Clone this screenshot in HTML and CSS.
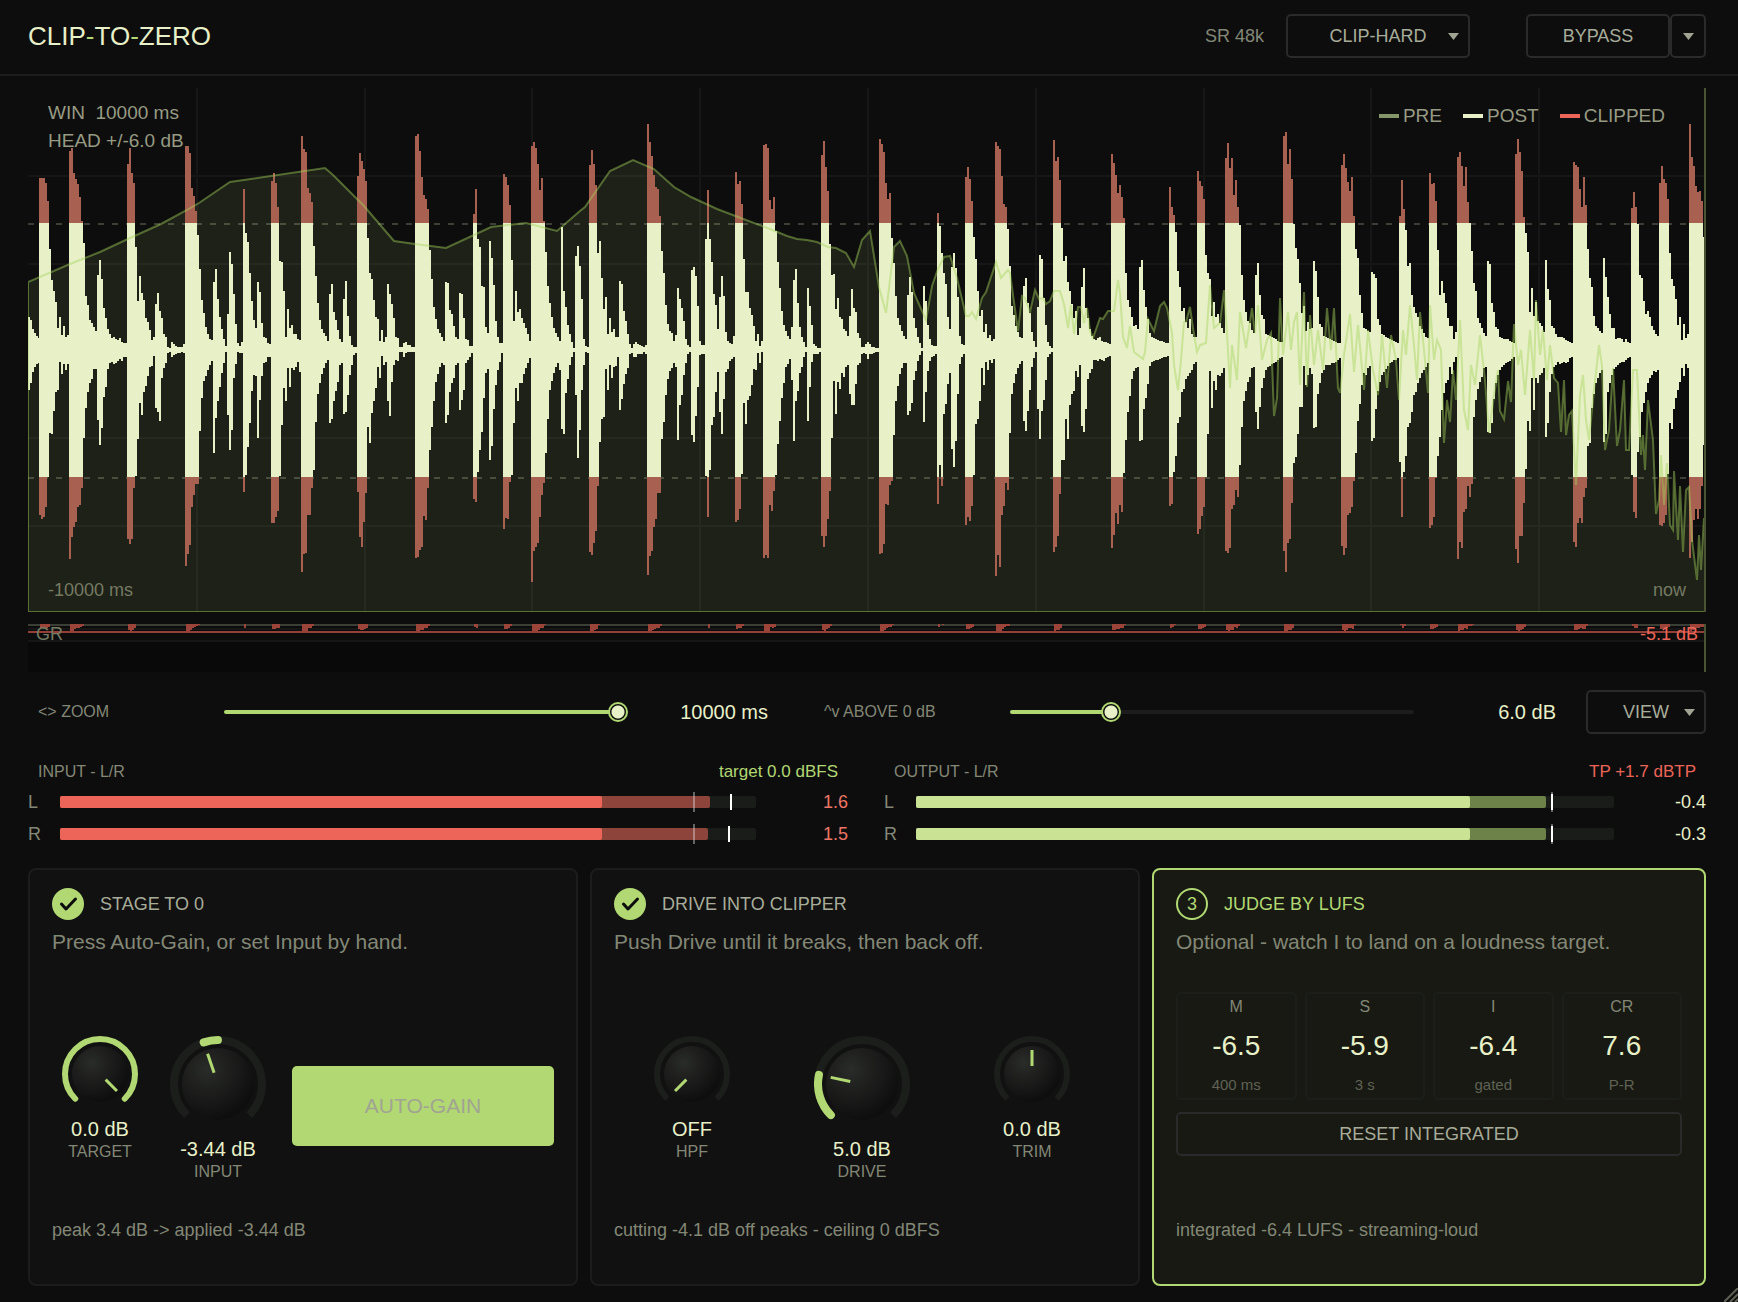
FILE: index.html
```
<!DOCTYPE html>
<html lang="en">
<head>
    <meta charset="UTF-8">
    <meta name="viewport" content="width=device-width, initial-scale=1.0">
    <title>Clip-To-Zero</title>
    <link rel="stylesheet" href="styles.css">
</head>
<body>
    <header class="header">
        <h1 class="logo">CLIP<span>-</span>TO<span>-</span>ZERO</h1>
        <div class="sample-rate">SR 48k</div>
        <div class="select mode-select">
            <select aria-label="Clip mode">
                <option>CLIP-HARD</option>
                <option>CLIP-SOFT</option>
            </select>
            <svg class="arrow" viewBox="0 0 11 7"><path d="M0 0H11L5.5 7Z"/></svg>
        </div>
        <div class="bypass-group">
            <button class="button bypass-button">BYPASS</button>
            <button class="button more-button" aria-label="Bypass options">
                <svg class="arrow" viewBox="0 0 11 7"><path d="M0 0H11L5.5 7Z"/></svg>
            </button>
        </div>
    </header>

    <main class="main">
        <div class="scope">
            <svg class="scope-svg" viewBox="0 0 1678 524" preserveAspectRatio="none">
                <path id="spectrum-fill" class="spectrum-fill"/>
                <path id="grid" class="grid-lines"/>
                <path class="ceiling" d="M0 136H1678M0 390H1678"/>
                <path id="wave-clip" class="wave-clip"/>
                <path id="wave-post" class="wave-post"/>
                <path id="spectrum-line" class="spectrum-line"/>
                <path class="playhead" d="M1677 0V524"/>
            </svg>
            <div class="scope-info">WIN  10000 ms<br>HEAD +/-6.0 dB</div>
            <div class="legend">
                <span class="pre">PRE</span>
                <span class="post">POST</span>
                <span class="clipped">CLIPPED</span>
            </div>
            <div class="time-start">-10000 ms</div>
            <div class="time-end">now</div>
        </div>

        <div class="gr">
            <svg class="gr-svg" viewBox="0 0 1678 48" preserveAspectRatio="none">
                <path class="gr-back" d="M0 0H1678V17H0Z"/>
                <path class="gr-top" d="M0 1H1678"/>
                <path class="gr-grid" d="M0 5H1678M0 17H1678"/>
                <path id="gr-bars" class="gr-bars"/>
                <path class="gr-max" d="M0 8H1678"/>
                <path class="playhead" d="M1677 0V48"/>
            </svg>
            <div class="gr-label">GR</div>
            <div class="gr-value">-5.1 dB</div>
        </div>

        <div class="controls">
            <label class="control-label" for="zoom">&lt;&gt; ZOOM</label>
            <input class="slider" id="zoom" type="range" min="0" max="100" step="0.1" value="100" style="--fill: 98%">
            <output class="control-value" for="zoom">10000 ms</output>
            <label class="control-label above-label" for="above">^v ABOVE 0 dB</label>
            <input class="slider" id="above" type="range" min="0" max="100" step="0.1" value="23.7" style="--fill: 25%">
            <output class="control-value" for="above">6.0 dB</output>
            <div class="select view-select">
                <select aria-label="View">
                    <option>VIEW</option>
                </select>
                <svg class="arrow" viewBox="0 0 11 7"><path d="M0 0H11L5.5 7Z"/></svg>
            </div>
        </div>

        <div class="meters">
            <section class="meter input-meter">
                <div class="meter-head"><span>INPUT - L/R</span><span class="target">target 0.0 dBFS</span></div>
                <div class="meter-row">
                    <span class="channel">L</span>
                    <div class="bar">
                        <div class="peak" style="width: 93.4%"></div>
                        <div class="rms" style="width: 77.9%"></div>
                        <div class="zero"></div>
                        <div class="hold" style="left: 96.3%"></div>
                    </div>
                    <span class="level">1.6</span>
                </div>
                <div class="meter-row">
                    <span class="channel">R</span>
                    <div class="bar">
                        <div class="peak" style="width: 93.1%"></div>
                        <div class="rms" style="width: 77.9%"></div>
                        <div class="zero"></div>
                        <div class="hold" style="left: 96%"></div>
                    </div>
                    <span class="level">1.5</span>
                </div>
            </section>
            <section class="meter output-meter">
                <div class="meter-head"><span>OUTPUT - L/R</span><span class="true-peak">TP +1.7 dBTP</span></div>
                <div class="meter-row">
                    <span class="channel">L</span>
                    <div class="bar">
                        <div class="peak" style="width: 90.3%"></div>
                        <div class="rms" style="width: 79.4%"></div>
                        <div class="zero"></div>
                        <div class="hold" style="left: 91%"></div>
                    </div>
                    <span class="level">-0.4</span>
                </div>
                <div class="meter-row">
                    <span class="channel">R</span>
                    <div class="bar">
                        <div class="peak" style="width: 90.3%"></div>
                        <div class="rms" style="width: 79.4%"></div>
                        <div class="zero"></div>
                        <div class="hold" style="left: 91%"></div>
                    </div>
                    <span class="level">-0.3</span>
                </div>
            </section>
        </div>

        <div class="cards">
            <section class="card">
                <div class="card-head">
                    <svg class="badge" viewBox="0 0 32 32"><circle class="disc" cx="16" cy="16" r="16"/><path class="check" d="M9.5 16L14 21L23.5 11"/></svg>
                    <h2>STAGE TO 0</h2>
                </div>
                <p class="hint">Press Auto-Gain, or set Input by hand.</p>
                <div class="card-body knobs stage-knobs">
                    <label class="knob small">
                        <input type="range" aria-label="Target">
                        <svg viewBox="0 0 76 76">
                            <defs>
                                <radialGradient id="body" cx="0.35" cy="0.3" r="0.7">
                                    <stop offset="0" stop-color="#2a2c29"/>
                                    <stop offset="1" stop-color="#0e0e0e"/>
                                </radialGradient>
                            </defs>
                            <circle class="body" cx="38" cy="38" r="28"/>
                            <circle class="arc" cx="38" cy="38" r="35" pathLength="360" stroke-dasharray="270 90" transform="rotate(135 38 38)"/>
                            <path class="pointer" d="M38 14V30" transform="rotate(135 38 38)"/>
                        </svg>
                        <span class="knob-value">0.0 dB</span>
                        <span class="knob-name">TARGET</span>
                    </label>
                    <label class="knob big">
                        <input type="range" aria-label="Input">
                        <svg viewBox="0 0 96 96">
                            <circle class="body" cx="48" cy="48" r="36"/>
                            <circle class="track" cx="48" cy="48" r="44" pathLength="360" stroke-dasharray="270 90" transform="rotate(135 48 48)"/>
                            <circle class="arc" cx="48" cy="48" r="44" pathLength="360" stroke-dasharray="19 341" transform="rotate(251 48 48)"/>
                            <path class="pointer" d="M48 16V36" transform="rotate(-19 48 48)"/>
                        </svg>
                        <span class="knob-value">-3.44 dB</span>
                        <span class="knob-name">INPUT</span>
                    </label>
                    <button class="auto-gain">AUTO-GAIN</button>
                </div>
                <p class="status">peak 3.4 dB -&gt; applied -3.44 dB</p>
            </section>

            <section class="card">
                <div class="card-head">
                    <svg class="badge" viewBox="0 0 32 32"><circle class="disc" cx="16" cy="16" r="16"/><path class="check" d="M9.5 16L14 21L23.5 11"/></svg>
                    <h2>DRIVE INTO CLIPPER</h2>
                </div>
                <p class="hint">Push Drive until it breaks, then back off.</p>
                <div class="card-body knobs drive-knobs">
                    <label class="knob small">
                        <input type="range" aria-label="HPF">
                        <svg viewBox="0 0 76 76">
                            <circle class="body" cx="38" cy="38" r="28"/>
                            <circle class="track" cx="38" cy="38" r="35" pathLength="360" stroke-dasharray="270 90" transform="rotate(135 38 38)"/>
                            <path class="pointer" d="M38 14V30" transform="rotate(-135 38 38)"/>
                        </svg>
                        <span class="knob-value">OFF</span>
                        <span class="knob-name">HPF</span>
                    </label>
                    <label class="knob big">
                        <input type="range" aria-label="Drive">
                        <svg viewBox="0 0 96 96">
                            <circle class="body" cx="48" cy="48" r="36"/>
                            <circle class="track" cx="48" cy="48" r="44" pathLength="360" stroke-dasharray="270 90" transform="rotate(135 48 48)"/>
                            <circle class="arc" cx="48" cy="48" r="44" pathLength="360" stroke-dasharray="57 303" transform="rotate(135 48 48)"/>
                            <path class="pointer" d="M48 16V36" transform="rotate(-78 48 48)"/>
                        </svg>
                        <span class="knob-value">5.0 dB</span>
                        <span class="knob-name">DRIVE</span>
                    </label>
                    <label class="knob small">
                        <input type="range" aria-label="Trim">
                        <svg viewBox="0 0 76 76">
                            <circle class="body" cx="38" cy="38" r="28"/>
                            <circle class="track" cx="38" cy="38" r="35" pathLength="360" stroke-dasharray="270 90" transform="rotate(135 38 38)"/>
                            <path class="pointer" d="M38 14V30"/>
                        </svg>
                        <span class="knob-value">0.0 dB</span>
                        <span class="knob-name">TRIM</span>
                    </label>
                </div>
                <p class="status">cutting -4.1 dB off peaks - ceiling 0 dBFS</p>
            </section>

            <section class="card active">
                <div class="card-head">
                    <span class="badge number">3</span>
                    <h2>JUDGE BY LUFS</h2>
                </div>
                <p class="hint">Optional - watch I to land on a loudness target.</p>
                <div class="card-body lufs">
                    <div class="readouts">
                        <div class="readout"><span>M</span><strong>-6.5</strong><small>400 ms</small></div>
                        <div class="readout"><span>S</span><strong>-5.9</strong><small>3 s</small></div>
                        <div class="readout"><span>I</span><strong>-6.4</strong><small>gated</small></div>
                        <div class="readout"><span>CR</span><strong>7.6</strong><small>P-R</small></div>
                    </div>
                    <button class="button reset-button">RESET INTEGRATED</button>
                </div>
                <p class="status">integrated -6.4 LUFS - streaming-loud</p>
            </section>
        </div>
    </main>
    <svg class="grip" viewBox="0 0 14 14"><path d="M0 14L14 0M6 14L14 6M11 14L14 11"/></svg>

    <script src="script.js"></script>
</body>
</html>
```
FILE: styles.css
```
* {
    box-sizing: border-box;
}
body {
    margin: 0;
    min-height: 100vh;
    display: flex;
    flex-direction: column;
    background-color: #0d0d0d;
    color: #838776;
    font-family: "Liberation Sans", Arial, sans-serif;
    font-size: 18px;
    line-height: 22px;
}
h1, h2, p {
    margin: 0;
    font-weight: normal;
}

/* header */
.header {
    display: flex;
    align-items: center;
    height: 76px;
    padding: 0 32px 2px 28px;
    border-bottom: 2px solid #1c1c1c;
}
.logo {
    margin-right: auto;
    font-size: 26px;
    line-height: 32px;
    color: #e8f0c8;
}
.logo span {
    color: #b2d873;
}
.sample-rate {
    margin-right: 22px;
}
.button, .select select {
    height: 44px;
    padding: 0;
    border: 2px solid #2a2a2a;
    border-radius: 5px;
    background: transparent;
    color: #a8ac9a;
    font: inherit;
    cursor: pointer;
}
.select {
    position: relative;
}
.select select {
    width: 100%;
    appearance: none;
    text-align: center;
    text-align-last: center;
}
.select .arrow {
    position: absolute;
    right: 11px;
    top: 19px;
    pointer-events: none;
}
.arrow {
    display: block;
    width: 11px;
    height: 7px;
    fill: #a0a492;
}
.mode-select {
    width: 184px;
    margin-right: 56px;
}
.view-select {
    width: 120px;
    justify-self: end;
}
.bypass-group {
    display: flex;
}
.bypass-button {
    width: 144px;
}
.more-button {
    width: 36px;
    display: flex;
    align-items: center;
    justify-content: center;
}

.main {
    flex: 1;
    display: flex;
    flex-direction: column;
    padding: 12px 32px 16px 28px;
}

/* waveform */
.scope {
    position: relative;
    flex: 1;
    min-height: 300px;
    font-size: 19px;
    line-height: 28px;
    color: #979b83;
}
.scope-svg, .gr-svg {
    position: absolute;
    width: 100%;
    height: 100%;
}
.grid-lines {
    stroke: rgba(255, 255, 255, 0.04);
    stroke-width: 2;
}
.ceiling {
    stroke: rgba(232, 240, 200, 0.22);
    stroke-width: 2;
    stroke-dasharray: 6 8;
}
.spectrum-fill {
    fill: #1d2117;
}
.spectrum-line {
    fill: none;
    stroke: rgba(165, 210, 90, 0.45);
    stroke-width: 2;
}
.wave-clip {
    fill: #a86151;
    shape-rendering: crispEdges;
}
.wave-post {
    fill: #e8f0c8;
    shape-rendering: crispEdges;
}
.playhead {
    stroke: #4a5433;
    stroke-width: 2;
}
.scope-info {
    position: absolute;
    left: 20px;
    top: 11px;
    white-space: pre;
}
.legend {
    position: absolute;
    right: 41px;
    top: 14px;
    display: flex;
    gap: 21px;
}
.legend span {
    display: flex;
    align-items: center;
    gap: 4px;
}
.legend span::before {
    content: "";
    width: 20px;
    height: 4px;
    background-color: #84966a;
}
.legend .post::before {
    background-color: #e8f0c8;
}
.legend .clipped::before {
    background-color: #ec6558;
}
.time-start, .time-end {
    position: absolute;
    bottom: 8px;
    font-size: 18px;
    color: #757a63;
}
.time-start {
    left: 20px;
}
.time-end {
    right: 20px;
}

/* gain reduction */
.gr {
    position: relative;
    height: 48px;
    margin-top: 12px;
    background-color: #090909;
}
.gr-back {
    fill: #0c0c0c;
}
.gr-top {
    stroke: #3b3e34;
    stroke-width: 2;
}
.gr-grid {
    stroke: #161616;
    stroke-width: 2;
}
.gr-bars {
    fill: #9c4439;
    shape-rendering: crispEdges;
}
.gr-max {
    stroke: #943f37;
    stroke-width: 2;
}
.gr-label, .gr-value {
    position: absolute;
    top: -1px;
}
.gr-label {
    left: 8px;
    color: #757a63;
}
.gr-value {
    right: 8px;
    color: #ec6558;
}

/* sliders */
.controls {
    display: grid;
    grid-template-columns: 196px 1fr 140px 242px 1fr 142px 150px;
    align-items: center;
    margin-top: 18px;
}
.control-label {
    padding-left: 10px;
    font-size: 16px;
}
.above-label {
    padding-left: 56px;
}
.control-value {
    font-size: 20px;
    color: #e8f0c8;
    text-align: right;
}
.slider {
    width: 100%;
    height: 20px;
    margin: 0;
    appearance: none;
    background: transparent;
}
.slider::-webkit-slider-runnable-track {
    height: 4px;
    border-radius: 2px;
    background: linear-gradient(to right, #b2d873 var(--fill), #1c1c1c var(--fill));
}
.slider::-webkit-slider-thumb {
    appearance: none;
    width: 20px;
    height: 20px;
    margin-top: -8px;
    border: 2px solid #b2d873;
    border-radius: 50%;
    background: radial-gradient(circle, #e8f0c8 6px, #0d0d0d 7px);
}

/* meters */
.meters {
    display: grid;
    grid-template-columns: 410fr 411fr;
    gap: 36px;
    margin-top: 26px;
}
.meter-head {
    display: flex;
    justify-content: space-between;
    padding: 2px 10px 0;
    font-size: 16px;
    line-height: 20px;
}
.target, .true-peak {
    font-size: 17px;
    color: #b2d873;
}
.true-peak {
    color: #ec6558;
}
.meter-row {
    display: flex;
    align-items: center;
    height: 24px;
    margin-top: 8px;
}
.channel {
    width: 32px;
}
.bar {
    position: relative;
    flex: 1;
    height: 12px;
    border-radius: 2px;
    background-color: #1a1c19;
}
.bar div {
    position: absolute;
    height: 12px;
    border-radius: 2px;
}
.bar .peak {
    background-color: #8c443b;
}
.bar .rms {
    background-color: #ec6558;
}
.bar .zero {
    left: 91%;
    top: -4px;
    width: 2px;
    height: 20px;
    border-radius: 0;
    background-color: rgba(232, 232, 232, 0.4);
}
.bar .hold {
    top: -2px;
    width: 2px;
    height: 16px;
    border-radius: 0;
    background-color: #fff;
}
.output-meter .peak {
    background-color: #6c8248;
}
.output-meter .rms {
    background-color: #cae294;
}
.level {
    width: 92px;
    text-align: right;
    color: #ec7466;
}
.output-meter .level {
    color: #e8f0c8;
}

/* step cards */
.cards {
    display: grid;
    grid-template-columns: 275fr 275fr 277fr;
    gap: 12px;
    margin-top: 22px;
}
.card {
    padding: 18px 22px 42px;
    border: 2px solid #1c1c1c;
    border-radius: 8px;
    background-color: #111;
}
.card.active {
    border-color: #b2d873;
    background-color: #171912;
}
.card-head {
    display: flex;
    align-items: center;
    gap: 16px;
}
.card-head h2 {
    font-size: 18px;
    color: #a8ac9a;
}
.card.active h2 {
    color: #b2d873;
}
.badge {
    width: 32px;
    height: 32px;
}
.badge .disc {
    fill: #b2d873;
}
.badge .check {
    fill: none;
    stroke: #0d0d0d;
    stroke-width: 3;
    stroke-linecap: round;
    stroke-linejoin: round;
}
.badge.number {
    border: 2px solid #b2d873;
    border-radius: 50%;
    line-height: 28px;
    text-align: center;
    color: #b2d873;
}
.hint {
    margin-top: 10px;
    font-size: 21px;
    line-height: 24px;
}
.card-body {
    min-height: 264px;
}
.status {
    line-height: 24px;
}
.knobs {
    display: flex;
    align-items: flex-start;
    padding-top: 82px;
}
.stage-knobs {
    padding-left: 10px;
}
.drive-knobs {
    justify-content: space-between;
    padding-left: 40px;
    padding-right: 46px;
}
.knob {
    position: relative;
    display: flex;
    flex-direction: column;
    align-items: center;
    white-space: nowrap;
}
.knob.small {
    width: 76px;
}
.knob.big {
    width: 96px;
}
.knob input {
    position: absolute;
    width: 100%;
    margin: 0;
    opacity: 0;
}
.knob svg {
    width: 100%;
    margin-bottom: 6px;
    fill: none;
}
.knob .body {
    fill: url(#body);
}
.knob .track, .knob .arc {
    stroke: #1c1e1b;
    stroke-width: 6;
}
.knob .arc {
    stroke: #b2d873;
    stroke-linecap: round;
}
.big .track, .big .arc {
    stroke-width: 8;
}
.knob .pointer {
    stroke: #b2d873;
    stroke-width: 3;
}
.knob-value {
    font-size: 20px;
    color: #e8f0c8;
}
.knob-name {
    font-size: 16px;
    line-height: 24px;
}
.stage-knobs .big {
    margin: 0 26px 0 32px;
}
.auto-gain {
    flex: 1;
    height: 80px;
    margin-top: 30px;
    border: none;
    border-radius: 5px;
    background-color: #b2d873;
    color: #a0a492;
    font: inherit;
    font-size: 21px;
}
.lufs {
    padding-top: 38px;
}
.readouts {
    display: grid;
    grid-template-columns: repeat(4, 1fr);
    gap: 8px;
    margin-bottom: 12px;
}
.readout {
    display: flex;
    flex-direction: column;
    align-items: center;
    justify-content: space-between;
    height: 108px;
    padding: 2px 0;
    border: 2px solid #1c1e1a;
    border-radius: 5px;
    font-size: 16px;
}
.readout strong {
    font-size: 28px;
    font-weight: normal;
    color: #e8f0c8;
}
.readout small {
    font-size: 15px;
    color: #5f6255;
}
.reset-button {
    width: 100%;
}
.grip {
    position: fixed;
    right: 0;
    bottom: 0;
    width: 14px;
    height: 14px;
    stroke: #5d6053;
    stroke-width: 2;
}
```
FILE: script.js
```
// each hit: [x, heights above the centre line, heights below it], one value per 2px column
const hits = [
    [28, [33,30,21,17,14,12], [40,33,22,17,14,13]],
    [39, [172,172,172,167,149,101,70,59,48,22,33,15,24,13,15], [165,169,167,157,127,83,84,61,42,40,12,24,14,20,14]],
    [69, [199,202,177,171,166,153,129,107,54,45,30,27,23,19,75,90,71,42,32,21,16,12,13,11,10,12,8,7,7], [209,187,177,172,157,155,138,88,58,42,33,29,19,19,70,95,78,47,37,19,13,12,14,13,11,9,11,7,7]],
    [127, [186,202,177,167,103,49,74,57,50,32,28,20,10,13,46,57,39,32,16,13,3,2,8,6,4,3,3,3,6], [189,194,189,138,126,89,53,65,42,36,26,17,16,6,58,62,71,28,18,13,3,2,7,5,4,3,3,2,3]],
    [185, [204,204,197,162,154,139,115,81,50,37,23,16,11,10,68,81,51,33,21,11,4,36,98,86,56,26,7,4,8], [216,204,195,157,145,134,134,81,48,31,26,20,15,11,103,68,51,37,23,13,2,65,100,80,28,14,2,3,3]],
    [243, [161,117,108,77,49,30,22,68,58,27,13,12,7,6], [142,125,97,73,41,25,26,88,50,26,13,12,7,7]],
    [271, [169,177,167,143,89,88,59,13,41,22,25,16,16,11,10], [173,173,167,161,126,75,38,51,18,37,18,20,17,12,22]],
    [301, [214,201,198,162,157,148,104,74,47,30,21,17,14,9,56,66,38,30,20,11,8,51,69,34,14,5,3,3], [222,204,203,165,165,138,120,72,44,33,24,18,13,10,73,69,51,41,32,15,13,64,62,45,25,15,5,3]],
    [357, [174,197,189,181,169,112,77,71,50,33,31,9,20,8,13,66,56,46,32,13,12,3,3,7,8,5,5,3,3], [142,187,197,172,143,77,93,63,51,38,17,28,6,15,12,51,66,32,15,10,11,2,2,7,3,2,2,2,2]],
    [415, [214,216,199,173,155,151,141,100,71,43,31,21,17,13,9,68,67,40,36,24,13,11,57,56,32,11,10,4,4], [208,207,200,197,166,170,138,100,77,51,32,24,17,13,15,73,65,42,33,28,15,13,60,50,40,13,10,7,3]],
    [473, [136,161,111,103,64,63,23,17,109,92,65,29,13,7,7], [149,152,122,100,82,48,23,19,110,96,59,35,20,12,3]],
    [503, [176,173,165,145,90,29,59,38,41,32,27,22,16,9], [179,168,169,132,125,73,38,51,33,33,24,18,13,8]],
    [531, [204,208,202,186,160,172,129,98,64,47,33,22,17,13,9,123,59,43,25,16,8,2,94,104,84,51,11,4,3], [232,201,197,193,167,145,133,103,69,40,31,23,17,13,20,79,84,43,29,15,7,2,45,108,80,40,15,2,3]],
    [589, [185,200,186,165,97,109,72,41,53,16,32,18,21,13,13,69,66,39,29,16,6,2,6,8,6,5,4,3,5], [202,205,193,181,136,92,69,67,19,40,15,28,17,16,7,60,49,34,24,18,4,3,7,7,4,4,4,2,4]],
    [647, [226,208,194,175,163,161,134,99,77,45,26,19,17,9,15,62,51,42,29,11,5,3,80,83,74,44,9,5,5], [225,206,201,177,169,143,143,89,72,45,29,21,18,13,17,90,55,45,25,13,4,2,85,92,66,37,5,4,4]],
    [705, [111,160,111,88,56,45,21,53,74,54,18,9,7,6,14], [126,167,120,75,67,42,22,62,84,49,22,19,11,9,7]],
    [735, [178,166,169,146,91,58,58,42,35,24,9,16,4,9], [172,170,159,124,53,74,50,46,35,19,20,3,13,2]],
    [763, [205,206,202,150,141,153,119,88,62,39,25,19,14,11,23,70,81,47,23,13,8,3,62,44,25,6,4,2,2], [208,205,208,155,161,141,125,94,71,48,33,17,14,9,30,91,51,41,23,17,7,2,71,37,12,4,4,4,2]],
    [821, [195,209,183,159,106,75,76,41,52,33,31,21,19,14,34,61,42,38,17,12,3,3,6,8,6,3,3,2,2], [186,197,186,169,141,88,31,64,32,39,23,27,17,15,44,55,55,34,15,13,4,3,4,9,4,4,3,2,2]],
    [879, [211,206,198,167,151,157,112,87,54,32,25,19,14,11,55,73,58,32,22,13,7,2,64,49,25,11,5,4,4], [204,203,194,154,155,135,131,85,51,36,24,18,13,13,65,61,53,30,21,11,5,1,72,42,21,11,7,6,4]],
    [937, [137,124,97,77,66,33,21,83,97,82,53,14,6,5], [154,115,136,64,54,34,23,99,117,91,44,14,7,4]],
    [965, [173,183,171,149,113,91,59,34,40,18,26,12,15,9,11], [175,167,171,156,125,74,69,51,18,35,12,20,10,13,9]],
    [995, [208,204,201,174,146,143,121,84,44,35,24,18,13,12,64,72,47,37,18,9,3,43,95,91,52,25,8,4,2], [226,205,217,165,156,133,140,83,44,33,24,18,14,11,71,81,61,40,17,8,2,59,89,61,50,30,7,4,2]],
    [1053, [210,189,193,170,122,89,94,68,59,46,32,39,15,22,63,82,42,32,21,14,11,10,12,13,9,8,8,7,6], [202,197,186,144,110,110,69,89,55,44,41,21,27,15,76,82,59,29,23,19,10,10,11,9,10,11,8,7,6]],
    [1111, [196,187,175,157,165,153,132,77,50,43,33,24,25,21,83,90,60,43,31,17,13,12,11,10,9,9,8,7,7], [198,185,163,174,155,162,123,90,62,46,29,21,18,17,91,90,59,48,34,16,12,11,10,10,9,8,7,7,6]],
    [1169, [163,143,135,118,79,63,39,42,28,22,31,16,13,13], [156,154,122,106,73,67,42,39,29,26,23,20,14,12]],
    [1197, [179,169,164,151,95,77,71,34,48,33,36,27,22,17], [184,179,166,157,127,84,21,58,31,40,25,26,23,18]],
    [1225, [192,207,182,192,155,170,143,125,75,50,38,29,27,20,17,75,87,55,35,31,16,15,14,13,12,11,9,8,8], [201,203,198,159,155,140,147,115,77,51,41,32,27,18,17,62,79,57,38,28,20,17,16,14,13,12,10,8,7]],
    [1283, [214,218,186,201,171,126,102,91,67,37,44,19,28,21,22,89,79,53,26,23,14,13,12,11,10,9,8,7,7], [201,222,193,189,153,113,107,84,57,57,16,35,25,18,24,78,77,44,33,23,20,15,15,15,13,13,12,10,8]],
    [1341, [185,196,182,168,159,173,134,101,92,55,37,22,21,19,18,78,76,72,31,25,16,15,13,12,11,10,9,8,7], [196,205,198,165,163,157,131,103,71,54,35,23,25,18,16,91,88,59,41,32,25,22,19,16,13,12,10,10,8]],
    [1399, [134,170,141,120,84,87,55,43,37,33,24,21,17,13,12], [112,167,122,106,77,73,62,45,42,33,28,23,20,17,13]],
    [1429, [177,166,167,149,100,55,69,57,47,32,24,24,11,18], [178,175,167,128,106,87,60,43,33,30,17,24,12,7]],
    [1457, [193,198,184,164,183,148,127,99,67,59,32,27,22,17,14,89,86,47,38,23,21,13,12,11,11,11,9,8,7], [209,192,198,162,159,136,147,134,67,50,39,32,27,18,17,82,83,73,49,33,25,20,17,15,13,12,11,9,7]],
    [1515, [196,211,198,179,133,117,98,38,62,34,48,29,27,24,18,90,61,50,24,22,16,13,13,13,12,10,9,8,7], [199,213,186,186,153,119,71,81,28,60,28,33,25,23,18,87,73,42,24,17,15,12,14,13,12,13,12,8,7]],
    [1573, [188,185,183,161,143,173,145,101,72,63,34,24,22,19,17,92,73,53,36,22,22,11,12,12,11,8,11,8,7], [192,197,173,168,173,147,138,96,93,58,44,33,28,23,20,92,84,42,33,25,19,17,15,13,12,12,10,8,7]],
    [1631, [142,158,143,126,75,72,49,36,39,33,24,20,16,14], [125,162,168,102,87,62,53,42,33,28,25,21,22,20]],
    [1659, [167,184,171,167,151,97,71,64,51,25,33,10,26,12,16], [175,176,173,165,124,73,79,59,48,40,32,18,26,14,18]],
    [1689, [226,193,184,164,158,159,149,113], [208,192,170,159,169,159,136,95]]
];

// spectrum curve, x,y
const spectrum = '28,282 70,264 100,252 130,238 161,224 187,210 199,203 230,182 325,168 333,175 364,206 394,241 415,244 446,248 474,235 491,227 526,223 557,231 580,211 585,207 610,171 633,160 654,169 674,187 691,197 717,209 746,220 770,229 787,236 797,239 807,240 817,242 828,247 836,248 846,253 854,267 862,240 870,231 879,287 886,313 894,247 900,241 907,256 914,293 926,320 932,286 938,269 944,257 950,256 957,278 966,316 969,316 972,312 976,319 982,298 986,292 996,262 1001,278 1008,270 1010,273 1018,331 1022,296 1025,298 1030,312 1035,290 1039,299 1043,298 1046,304 1050,301 1054,291 1060,291 1064,304 1068,328 1071,305 1074,334 1078,307 1081,307 1084,323 1087,308 1090,331 1093,338 1100,318 1103,319 1108,311 1114,311 1118,280 1120,293 1123,337 1127,348 1130,326 1134,352 1143,359 1145,352 1148,319 1154,331 1160,306 1164,302 1167,308 1172,333 1174,365 1178,390 1181,360 1184,322 1186,322 1190,307 1193,328 1197,352 1200,345 1206,343 1210,285 1214,328 1220,323 1224,290 1227,333 1230,388 1232,345 1237,380 1240,312 1246,348 1252,308 1255,333 1258,305 1262,360 1267,340 1271,333 1274,416 1277,398 1280,298 1283,355 1288,312 1291,350 1294,322 1297,312 1300,385 1304,292 1307,387 1310,315 1314,365 1318,330 1323,370 1327,308 1331,350 1334,308 1338,388 1340,393 1344,355 1350,314 1354,372 1358,325 1364,390 1368,330 1373,370 1378,395 1382,335 1387,388 1391,335 1396,360 1399,400 1403,330 1406,355 1410,305 1414,345 1417,380 1420,312 1424,350 1428,393 1430,305 1434,360 1437,340 1441,350 1444,443 1447,400 1450,422 1453,370 1456,400 1460,320 1464,410 1468,430 1471,365 1475,385 1480,335 1485,380 1489,433 1494,395 1498,370 1500,411 1504,419 1508,381 1511,402 1514,324 1518,365 1521,350 1525,395 1530,330 1534,380 1536,300 1540,355 1543,330 1547,380 1550,345 1554,378 1558,383 1561,432 1564,380 1566,435 1569,415 1572,411 1576,485 1580,395 1583,375 1586,420 1589,440 1594,390 1599,345 1602,366 1605,450 1609,430 1613,368 1617,446 1620,430 1624,380 1626,450 1629,450 1633,370 1637,370 1641,455 1643,435 1645,470 1648,400 1653,440 1656,514 1659,500 1661,455 1664,505 1667,463 1670,525 1673,530 1674,471 1678,540 1680,486 1683,552 1686,490 1689,487 1692,540 1697,580 1699,535 1701,570 1704,518 1706,545';

const left = 28;
const top0 = 88;
const width = 1678;
const height = 524;
const middle = 262;
const ceiling = 127;

function rect(x, y, w, h) {
    return 'M' + x + ' ' + y + 'h' + w + 'v' + h + 'h' + -w + 'z';
}

function setPath(id, d) {
    document.getElementById(id).setAttribute('d', d);
}

function drawWave() {
    let post = '';
    let clip = '';
    let gr = '';
    hits.forEach(([start, up, down]) => {
        up.forEach((a, i) => {
            const b = down[i];
            const x = start - left + i * 2;
            const w = Math.min(2, width - x);
            const postUp = Math.min(a, ceiling);
            const postDown = Math.min(b, ceiling);
            post += rect(x, middle - postUp, w, postUp + postDown);
            if (a > ceiling) clip += rect(x, middle - a, w, a - ceiling);
            if (b > ceiling) clip += rect(x, middle + ceiling, w, b - ceiling);
            const over = Math.max(a, b) / ceiling;
            if (over > 1) gr += rect(x + 1, 0, w, Math.ceil(30 * Math.log10(over)));
        });
    });
    setPath('wave-post', post);
    setPath('wave-clip', clip);
    setPath('gr-bars', gr);
}

function drawSpectrum() {
    const points = spectrum.split(' ').map((p) => {
        const [x, y] = p.split(',');
        return (x - left) + ' ' + (y - top0);
    });
    const d = 'M0 ' + height + 'L' + points.join('L') + 'L' + width + ' ' + height + 'z';
    setPath('spectrum-fill', d);
    setPath('spectrum-line', d);
}

function drawGrid() {
    let d = '';
    for (let i = 1; i < 10; i++) {
        d += 'M' + Math.round(i * width / 10 + 1) + ' 0V' + height;
    }
    for (let i = 1; i < 6; i++) {
        d += 'M0 ' + Math.round(i * height / 6 + 1) + 'H' + width;
    }
    setPath('grid', d);
}

drawWave();
drawSpectrum();
drawGrid();
```
